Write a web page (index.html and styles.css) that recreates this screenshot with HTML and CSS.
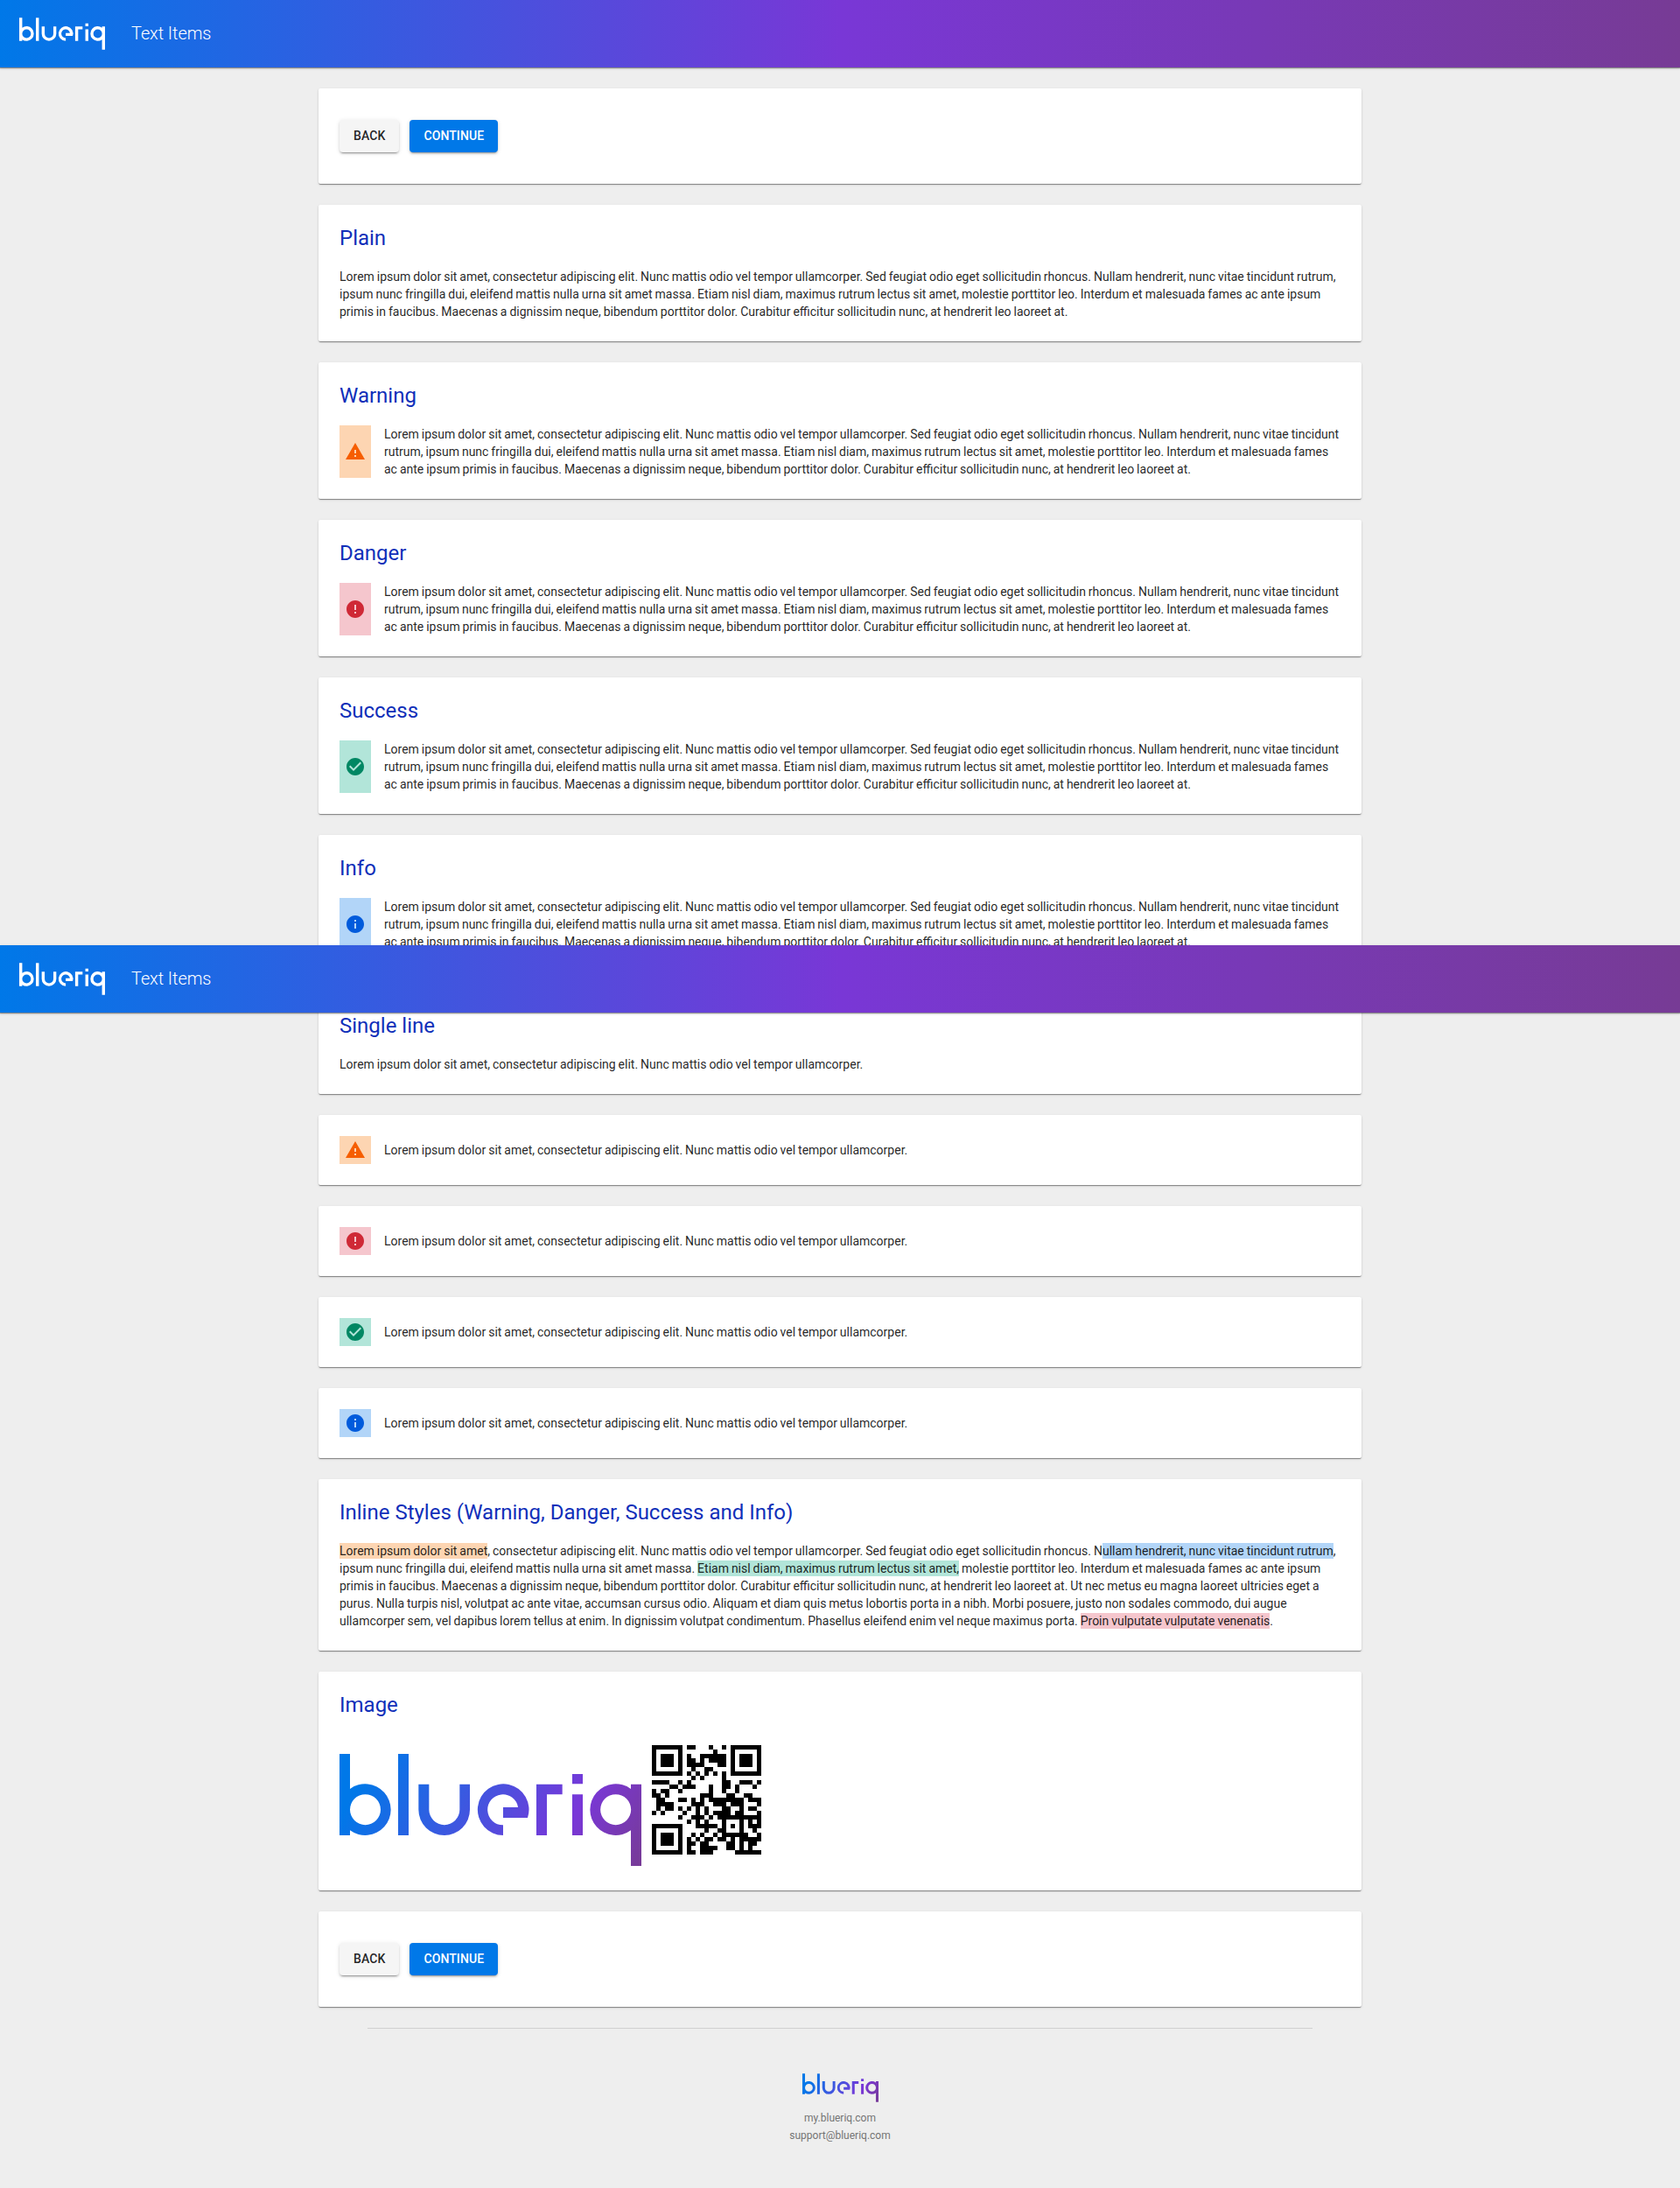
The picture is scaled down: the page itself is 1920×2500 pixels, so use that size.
FILE: index.html
```html
<!DOCTYPE html>
<html lang="en">
<head>
<meta charset="utf-8">
<title>Text Items</title>
<link rel="stylesheet" href="styles.css">
</head>
<body>
<svg class="defs" aria-hidden="true">
  <defs>
    <linearGradient id="brand" gradientUnits="userSpaceOnUse" x1="60" y1="-60" x2="1000" y2="480">
      <stop offset="0.08" stop-color="#0078e8"/>
      <stop offset="0.72" stop-color="#7937d8"/>
      <stop offset="1" stop-color="#773b92"/>
    </linearGradient>
    <symbol id="logo" viewBox="0 0 1035 384">
      <path d="M0 0H36V120A88 88 0 1 1 36 262V279H0ZM88.500 138.500A52.500 52.500 0 1 0 88.500 243.500A52.500 52.500 0 1 0 88.500 138.500Z" fill-rule="evenodd"/>
      <path d="M201 0H237V279H201Z"/>
      <path d="M271 104H307V191A52.500 52.500 0 0 0 412 191V104H447V191A88 88 0 0 1 271 191Z"/>
      <path d="M561 279A88 88 0 1 1 645 219H561V183H612A52.500 52.500 0 1 0 561 244Z"/>
      <path d="M675 104H764V139H711V279H675Z"/>
      <path d="M798 69H834V103H798ZM798 139H834V279H798Z"/>
      <path d="M999 104H1035V384H999V262A88 88 0 1 1 999 120ZM947 138.500A52.500 52.500 0 1 0 947 243.500A52.500 52.500 0 1 0 947 138.500Z" fill-rule="evenodd"/>
    </symbol>
    <symbol id="warning" viewBox="0 0 24 24"><path d="M1 21h22L12 2 1 21zm12-3h-2v-2h2v2zm0-4h-2v-4h2v4z"/></symbol>
    <symbol id="error" viewBox="0 0 24 24"><path d="M12 2C6.480 2 2 6.480 2 12s4.480 10 10 10 10-4.480 10-10S17.520 2 12 2zm1 15h-2v-2h2v2zm0-4h-2V7h2v6z"/></symbol>
    <symbol id="check" viewBox="0 0 24 24"><path d="M12 2C6.480 2 2 6.480 2 12s4.480 10 10 10 10-4.480 10-10S17.520 2 12 2zm-2 15l-5-5 1.410-1.410L10 14.170l7.590-7.590L19 8l-9 9z"/></symbol>
    <symbol id="info" viewBox="0 0 24 24"><path d="M12 2C6.480 2 2 6.480 2 12s4.480 10 10 10 10-4.480 10-10S17.520 2 12 2zm1 15h-2v-6h2v6zm0-8h-2V7h2v2z"/></symbol>
  </defs>
</svg>

<header class="toolbar">
  <svg class="toolbar-logo"><use href="#logo"/></svg>
  <span class="toolbar-title">Text Items</span>
</header>
<header class="toolbar toolbar-floating">
  <svg class="toolbar-logo"><use href="#logo"/></svg>
  <span class="toolbar-title">Text Items</span>
</header>

<main class="content">
  <section class="card actions">
    <button class="button">BACK</button>
    <button class="button primary">CONTINUE</button>
  </section>

  <section class="card">
    <h2>Plain</h2>
    <p>Lorem ipsum dolor sit amet, consectetur adipiscing elit. Nunc mattis odio vel tempor ullamcorper. Sed feugiat odio eget sollicitudin rhoncus. Nullam hendrerit, nunc vitae tincidunt rutrum, ipsum nunc fringilla dui, eleifend mattis nulla urna sit amet massa. Etiam nisl diam, maximus rutrum lectus sit amet, molestie porttitor leo. Interdum et malesuada fames ac ante ipsum primis in faucibus. Maecenas a dignissim neque, bibendum porttitor dolor. Curabitur efficitur sollicitudin nunc, at hendrerit leo laoreet at.</p>
  </section>

  <section class="card">
    <h2>Warning</h2>
    <div class="item warning">
      <span class="badge"><svg><use href="#warning"/></svg></span>
      <p>Lorem ipsum dolor sit amet, consectetur adipiscing elit. Nunc mattis odio vel tempor ullamcorper. Sed feugiat odio eget sollicitudin rhoncus. Nullam hendrerit, nunc vitae tincidunt rutrum, ipsum nunc fringilla dui, eleifend mattis nulla urna sit amet massa. Etiam nisl diam, maximus rutrum lectus sit amet, molestie porttitor leo. Interdum et malesuada fames ac ante ipsum primis in faucibus. Maecenas a dignissim neque, bibendum porttitor dolor. Curabitur efficitur sollicitudin nunc, at hendrerit leo laoreet at.</p>
    </div>
  </section>

  <section class="card">
    <h2>Danger</h2>
    <div class="item danger">
      <span class="badge"><svg><use href="#error"/></svg></span>
      <p>Lorem ipsum dolor sit amet, consectetur adipiscing elit. Nunc mattis odio vel tempor ullamcorper. Sed feugiat odio eget sollicitudin rhoncus. Nullam hendrerit, nunc vitae tincidunt rutrum, ipsum nunc fringilla dui, eleifend mattis nulla urna sit amet massa. Etiam nisl diam, maximus rutrum lectus sit amet, molestie porttitor leo. Interdum et malesuada fames ac ante ipsum primis in faucibus. Maecenas a dignissim neque, bibendum porttitor dolor. Curabitur efficitur sollicitudin nunc, at hendrerit leo laoreet at.</p>
    </div>
  </section>

  <section class="card">
    <h2>Success</h2>
    <div class="item success">
      <span class="badge"><svg><use href="#check"/></svg></span>
      <p>Lorem ipsum dolor sit amet, consectetur adipiscing elit. Nunc mattis odio vel tempor ullamcorper. Sed feugiat odio eget sollicitudin rhoncus. Nullam hendrerit, nunc vitae tincidunt rutrum, ipsum nunc fringilla dui, eleifend mattis nulla urna sit amet massa. Etiam nisl diam, maximus rutrum lectus sit amet, molestie porttitor leo. Interdum et malesuada fames ac ante ipsum primis in faucibus. Maecenas a dignissim neque, bibendum porttitor dolor. Curabitur efficitur sollicitudin nunc, at hendrerit leo laoreet at.</p>
    </div>
  </section>

  <section class="card">
    <h2>Info</h2>
    <div class="item info">
      <span class="badge"><svg><use href="#info"/></svg></span>
      <p>Lorem ipsum dolor sit amet, consectetur adipiscing elit. Nunc mattis odio vel tempor ullamcorper. Sed feugiat odio eget sollicitudin rhoncus. Nullam hendrerit, nunc vitae tincidunt rutrum, ipsum nunc fringilla dui, eleifend mattis nulla urna sit amet massa. Etiam nisl diam, maximus rutrum lectus sit amet, molestie porttitor leo. Interdum et malesuada fames ac ante ipsum primis in faucibus. Maecenas a dignissim neque, bibendum porttitor dolor. Curabitur efficitur sollicitudin nunc, at hendrerit leo laoreet at.</p>
    </div>
  </section>

  <section class="card">
    <h2>Single line</h2>
    <p>Lorem ipsum dolor sit amet, consectetur adipiscing elit. Nunc mattis odio vel tempor ullamcorper.</p>
  </section>

  <section class="card">
    <div class="item warning">
      <span class="badge"><svg><use href="#warning"/></svg></span>
      <p>Lorem ipsum dolor sit amet, consectetur adipiscing elit. Nunc mattis odio vel tempor ullamcorper.</p>
    </div>
  </section>
  <section class="card">
    <div class="item danger">
      <span class="badge"><svg><use href="#error"/></svg></span>
      <p>Lorem ipsum dolor sit amet, consectetur adipiscing elit. Nunc mattis odio vel tempor ullamcorper.</p>
    </div>
  </section>
  <section class="card">
    <div class="item success">
      <span class="badge"><svg><use href="#check"/></svg></span>
      <p>Lorem ipsum dolor sit amet, consectetur adipiscing elit. Nunc mattis odio vel tempor ullamcorper.</p>
    </div>
  </section>
  <section class="card">
    <div class="item info">
      <span class="badge"><svg><use href="#info"/></svg></span>
      <p>Lorem ipsum dolor sit amet, consectetur adipiscing elit. Nunc mattis odio vel tempor ullamcorper.</p>
    </div>
  </section>

  <section class="card">
    <h2>Inline Styles (Warning, Danger, Success and Info)</h2>
    <p><mark class="warning">Lorem ipsum dolor sit amet</mark>, consectetur adipiscing elit. Nunc mattis odio vel tempor ullamcorper. Sed feugiat odio eget sollicitudin rhoncus. N<mark class="info">ullam hendrerit, nunc vitae tincidunt rutrum</mark>, ipsum nunc fringilla dui, eleifend mattis nulla urna sit amet massa. <mark class="success">Etiam nisl diam, maximus rutrum lectus sit amet,</mark> molestie porttitor leo. Interdum et malesuada fames ac ante ipsum primis in faucibus. Maecenas a dignissim neque, bibendum porttitor dolor. Curabitur efficitur sollicitudin nunc, at hendrerit leo laoreet at. Ut nec metus eu magna laoreet ultricies eget a purus. Nulla turpis nisl, volutpat ac ante vitae, accumsan cursus odio. Aliquam et diam quis metus lobortis porta in a nibh. Morbi posuere, justo non sodales commodo, dui augue ullamcorper sem, vel dapibus lorem tellus at enim. In dignissim volutpat condimentum. Phasellus eleifend enim vel neque maximus porta. <mark class="danger">Proin vulputate vulputate venenatis</mark>.</p>
  </section>

  <section class="card">
    <h2>Image</h2>
    <div class="images">
      <svg class="image-logo"><use href="#logo"/></svg>
      <svg class="image-code" id="code" viewBox="0 0 25 25" data-url="https://www.blueriq.com/"></svg>
    </div>
  </section>

  <section class="card actions">
    <button class="button">BACK</button>
    <button class="button primary">CONTINUE</button>
  </section>
</main>

<footer class="footer">
  <svg class="footer-logo"><use href="#logo"/></svg>
  <span>my.blueriq.com</span>
  <span>support@blueriq.com</span>
</footer>
<script src="qr.js"></script>
</body>
</html>
```
FILE: styles.css
```css
* {
  box-sizing: border-box;
}

body {
  margin: 0;
  min-height: 2500px;
  background: #eee;
  color: rgba(0, 0, 0, 0.87);
  font: 400 14px/20px Roboto, sans-serif;
  position: relative;
}

.defs {
  position: absolute;
  width: 0;
  height: 0;
}

.toolbar {
  display: flex;
  align-items: center;
  gap: 30px;
  height: 77px;
  padding: 0 22px;
  background: linear-gradient(90deg, #0078e8, #7937d6 50%, #773b95);
  box-shadow: 0 1px 1px rgba(0, 0, 0, 0.35), 0 1px 3px rgba(0, 0, 0, 0.2);
  color: #fff;
}

.toolbar-floating {
  position: absolute;
  top: 1080px;
  left: 0;
  width: 100%;
  z-index: 1;
}

.toolbar-logo {
  width: 98px;
  height: 37px;
  fill: #fff;
}

.toolbar-title {
  padding-bottom: 2px;
  font-size: 20px;
  font-weight: 300;
  letter-spacing: -0.1px;
}

.content {
  display: flex;
  flex-direction: column;
  gap: 24px;
  width: 1192px;
  margin: 24px auto 0;
}

.card {
  padding: 24px;
  background: #fff;
  border-radius: 2px;
  box-shadow: 0 2px 1px -1px rgba(0, 0, 0, 0.25), 0 1px 1px rgba(0, 0, 0, 0.2), 0 1px 3px rgba(0, 0, 0, 0.12);
}

.card h2 {
  margin: 0 0 20px;
  color: #102fb9;
  font-size: 24px;
  font-weight: 400;
  line-height: 28px;
}

.card p {
  margin: 0;
  word-spacing: -0.53px;
}

.actions {
  display: flex;
  gap: 12px;
  padding: 36px 24px;
}

.button {
  height: 37px;
  padding: 0 16px 1px;
  border: 0;
  border-radius: 4px;
  background: #f5f5f5;
  color: rgba(0, 0, 0, 0.87);
  font: 500 14px/36px Roboto, sans-serif;
  letter-spacing: 0.1px;
  box-shadow: 0 3px 1px -2px rgba(0, 0, 0, 0.2), 0 2px 2px rgba(0, 0, 0, 0.14), 0 1px 5px rgba(0, 0, 0, 0.12);
}

.button.primary {
  background: #0078e8;
  color: #fff;
}

.item {
  display: flex;
  align-items: center;
  gap: 15px;
}

.badge {
  display: flex;
  align-items: center;
  justify-content: center;
  align-self: stretch;
  flex: 0 0 36px;
  min-height: 32px;
}

.badge svg {
  width: 24px;
  height: 24px;
  fill: currentColor;
}

.warning .badge,
mark.warning {
  background: #fdd5b2;
  color: #f65e00;
}

.danger .badge,
mark.danger {
  background: #f5c6cd;
  color: #cf2936;
}

.success .badge,
mark.success {
  background: #b2e5d9;
  color: #008763;
}

.info .badge,
mark.info {
  background: #b2d5f8;
  color: #005bdc;
}

.card mark {
  padding: 1px 0;
  color: rgba(0, 0, 0, 0.87);
}

.images {
  display: flex;
  align-items: flex-start;
  gap: 12px;
  height: 154px;
  padding-top: 12px;
}

.image-logo {
  width: 345px;
  height: 128px;
  margin-top: 10px;
  fill: url(#brand);
}

.image-code {
  width: 125px;
  height: 125px;
  shape-rendering: crispEdges;
}

.footer {
  display: flex;
  flex-direction: column;
  align-items: center;
  width: 1080px;
  margin: 24px auto 0;
  padding-top: 51px;
  border-top: 1px solid #d0d0d0;
  color: #757575;
  font-size: 12px;
}

.footer-logo {
  width: 87px;
  height: 33px;
  margin-bottom: 8px;
  fill: url(#brand);
}
```
FILE: qr.js
```js
// Draws a version 2-L QR code (25x25 modules) for the URL in data-url.
const SIZE = 25, DATA = 34, ECC = 10, MASK = 3;

function multiply(a, b) {
  let result = 0;
  for (; b; b >>= 1) {
    if (b & 1) result ^= a;
    a <<= 1;
    if (a & 256) a ^= 0x11d;
  }
  return result;
}

function codewords(text) {
  let bits = '0100' + text.length.toString(2).padStart(8, '0');
  for (const c of text) bits += c.charCodeAt(0).toString(2).padStart(8, '0');
  bits += '0000';
  const data = bits.match(/.{8}/g).map(b => parseInt(b, 2));
  for (let pad = 0; data.length < DATA; pad++) data.push(pad % 2 ? 17 : 236);

  let generator = [1], root = 1;
  for (let i = 0; i < ECC; i++) {
    const next = new Array(generator.length + 1).fill(0);
    generator.forEach((g, j) => { next[j] ^= g; next[j + 1] ^= multiply(g, root); });
    generator = next;
    root = multiply(root, 2);
  }
  const rest = data.concat(new Array(ECC).fill(0));
  for (let i = 0; i < DATA; i++) {
    const factor = rest[i];
    generator.forEach((g, j) => { rest[i + j] ^= multiply(g, factor); });
  }
  return data.concat(rest.slice(DATA));
}

function matrix(text) {
  const m = Array.from({ length: SIZE }, () => Array(SIZE).fill(null));
  const ring = (cx, cy, radius, light) => {
    for (let dy = -radius; dy <= radius; dy++) for (let dx = -radius; dx <= radius; dx++) {
      const x = cx + dx, y = cy + dy;
      if (x < 0 || y < 0 || x >= SIZE || y >= SIZE) continue;
      m[y][x] = light.includes(Math.max(Math.abs(dx), Math.abs(dy))) ? 0 : 1;
    }
  };
  ring(3, 3, 4, [2, 4]);
  ring(21, 3, 4, [2, 4]);
  ring(3, 21, 4, [2, 4]);
  ring(18, 18, 2, [1]);
  for (let i = 8; i < 17; i++) m[6][i] = m[i][6] = i % 2 ? 0 : 1;

  const level = 8 | MASK;
  let remainder = level << 10;
  for (let i = 14; i >= 10; i--) if (remainder >> i & 1) remainder ^= 0x537 << (i - 10);
  const format = ((level << 10) | remainder) ^ 0x5412;
  const bit = i => format >> i & 1;
  for (let i = 0; i < 6; i++) m[i][8] = bit(i);
  m[7][8] = bit(6);
  m[8][8] = bit(7);
  m[8][7] = bit(8);
  for (let i = 9; i < 15; i++) m[8][14 - i] = bit(i);
  for (let i = 0; i < 8; i++) m[8][24 - i] = bit(i);
  for (let i = 8; i < 15; i++) m[10 + i][8] = bit(i);
  m[17][8] = 1;

  const stream = codewords(text).map(w => w.toString(2).padStart(8, '0')).join('') + '0000000';
  let k = 0, up = true;
  for (let column = 24; column > 0; column -= 2) {
    if (column === 6) column = 5;
    for (let i = 0; i < SIZE; i++) {
      const y = up ? 24 - i : i;
      for (const x of [column, column - 1]) {
        if (m[y][x] === null) m[y][x] = Number(stream[k++]) ^ ((x + y) % 3 === 0 ? 1 : 0);
      }
    }
    up = !up;
  }
  return m;
}

const code = document.getElementById('code');
const path = document.createElementNS('http://www.w3.org/2000/svg', 'path');
path.setAttribute('d', matrix(code.dataset.url).map((row, y) =>
  row.map((on, x) => on ? `M${x} ${y}h1v1h-1z` : '').join('')).join(''));
code.append(path);
```
